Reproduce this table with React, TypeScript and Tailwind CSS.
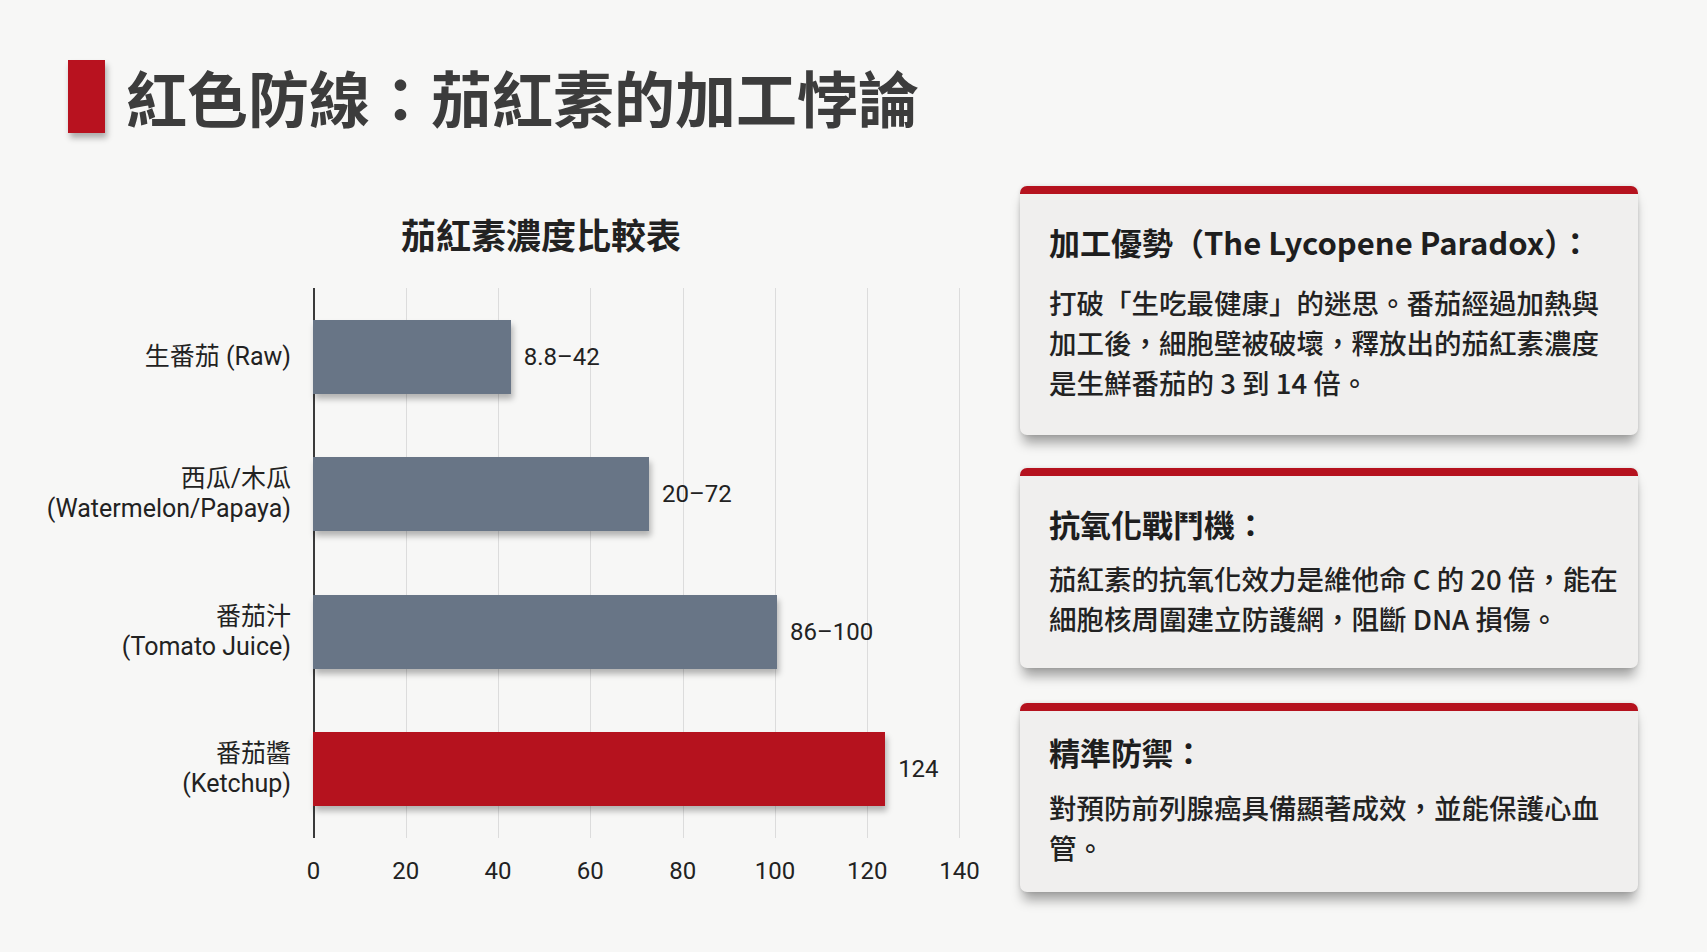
import React from "react";

const ITEMS = [
  { zh: "生番茄 (Raw)", en: "", value: 42.8, label: "8.8–42", hot: false },
  { zh: "西瓜/木瓜", en: "(Watermelon/Papaya)", value: 72.7, label: "20–72", hot: false },
  { zh: "番茄汁", en: "(Tomato Juice)", value: 100.4, label: "86–100", hot: false },
  { zh: "番茄醬", en: "(Ketchup)", value: 123.8, label: "124", hot: true },
];

const TICKS = [0, 20, 40, 60, 80, 100, 120, 140];
const PLOT_W = 647;
const MAX = 140;

export default function App() {
  return (
    <div className="w-[1707px] h-[952px] overflow-hidden bg-[#f7f7f6] font-['Noto_Sans_CJK_TC',sans-serif] text-[#222]">
      <header className="flex items-center gap-[21px] pl-[68px] pt-[60px]">
        <div className="h-[73px] w-[37px] bg-[#b8121f] shadow-[2px_5px_6px_rgba(0,0,0,0.3)]" />
        <h1 className="text-[61px] font-bold leading-[73px] tracking-normal text-[#3c3c3c]">
          紅色防線：茄紅素的加工悖論
        </h1>
      </header>

      <div className="mt-[53px] flex">
        <Chart />
        <div className="flex w-[618px] flex-col">
          <Card
            title="加工優勢（The Lycopene Paradox）："
            lines={[
              "打破「生吃最健康」的迷思。番茄經過加熱與",
              "加工後，細胞壁被破壞，釋放出的茄紅素濃度",
              "是生鮮番茄的 3 到 14 倍。",
            ]}
            className="h-[249px]"
            bodyGap="mt-[20px]"
            top="pt-[28px]"
          />
          <Card
            title="抗氧化戰鬥機："
            lines={[
              "茄紅素的抗氧化效力是維他命 C 的 20 倍，能在",
              "細胞核周圍建立防護網，阻斷 DNA 損傷。",
            ]}
            className="mt-[33px] h-[200px]"
            bodyGap="mt-[14px]"
            top="pt-[28px]"
          />
          <Card
            title="精準防禦："
            lines={["對預防前列腺癌具備顯著成效，並能保護心血", "管。"]}
            className="mt-[35px] h-[189px]"
            bodyGap="mt-[15px]"
            top="pt-[21px]"
          />
        </div>
      </div>
    </div>
  );
}

function Chart() {
  return (
    <div className="w-[1020px] pt-[28px] font-['Roboto','Noto_Sans_CJK_TC',sans-serif]">
      <h2 className="w-[1082px] text-center font-['Noto_Sans_CJK_TC',sans-serif] text-[35px] font-bold leading-[40px] text-[#222]">
        茄紅素濃度比較表
      </h2>
      <div className="mt-[34px] flex gap-[22px]">
        <div className="flex h-[550px] w-[291px] flex-col">
          {ITEMS.map((it) => (
            <div
              key={it.zh}
              className="flex flex-1 flex-col items-end justify-center text-right text-[25px] leading-[30px] text-[#222]"
            >
              <span className="whitespace-nowrap">{it.zh}</span>
              {it.en && <span className="whitespace-nowrap">{it.en}</span>}
            </div>
          ))}
        </div>
        <div>
          <div className="relative h-[550px] w-[647px]">
            <div className="absolute inset-0 flex justify-between">
              {TICKS.map((t) => (
                <div key={t} className={t === 0 ? "w-[2px] bg-[#3a3a3a]" : "w-px bg-[#dcdcdc]"} />
              ))}
            </div>
            <div className="relative flex h-full flex-col">
              {ITEMS.map((it) => (
                <div key={it.zh} className="flex flex-1 items-center">
                  <div
                    className={`h-[74px] shadow-[2px_5px_6px_rgba(0,0,0,0.28)] ${it.hot ? "bg-[#b5121e]" : "bg-[#687586]"}`}
                    style={{ width: (it.value / MAX) * PLOT_W }}
                  />
                  <span className="ml-[13px] text-[24px] leading-[30px] text-[#222]">{it.label}</span>
                </div>
              ))}
            </div>
          </div>
          <div className="mt-[18px] flex w-[647px] justify-between">
            {TICKS.map((t) => (
              <div key={t} className="flex w-px justify-center">
                <span className="text-[24px] leading-[30px] text-[#222]">{t}</span>
              </div>
            ))}
          </div>
        </div>
      </div>
    </div>
  );
}

function Card({
  title,
  lines,
  className = "",
  bodyGap = "mt-[16px]",
  top = "pt-[28px]",
}: {
  title: string;
  lines: string[];
  className?: string;
  bodyGap?: string;
  top?: string;
}) {
  return (
    <div
      className={`rounded-[7px] border-t-[8px] border-[#b5121e] bg-[#f0efee] px-[29px] shadow-[0_11px_12px_-3px_rgba(0,0,0,0.35),0_0_4px_rgba(0,0,0,0.12)] ${top} ${className}`}
    >
      <h3 className="whitespace-nowrap text-[31px] font-bold leading-[40px] text-[#1e1e1e]">{title}</h3>
      <p className={`whitespace-nowrap text-[27.5px] font-medium leading-[40px] text-[#222] ${bodyGap}`}>
        {lines.map((l, i) => (
          <React.Fragment key={i}>
            {l}
            {i < lines.length - 1 && <br />}
          </React.Fragment>
        ))}
      </p>
    </div>
  );
}
